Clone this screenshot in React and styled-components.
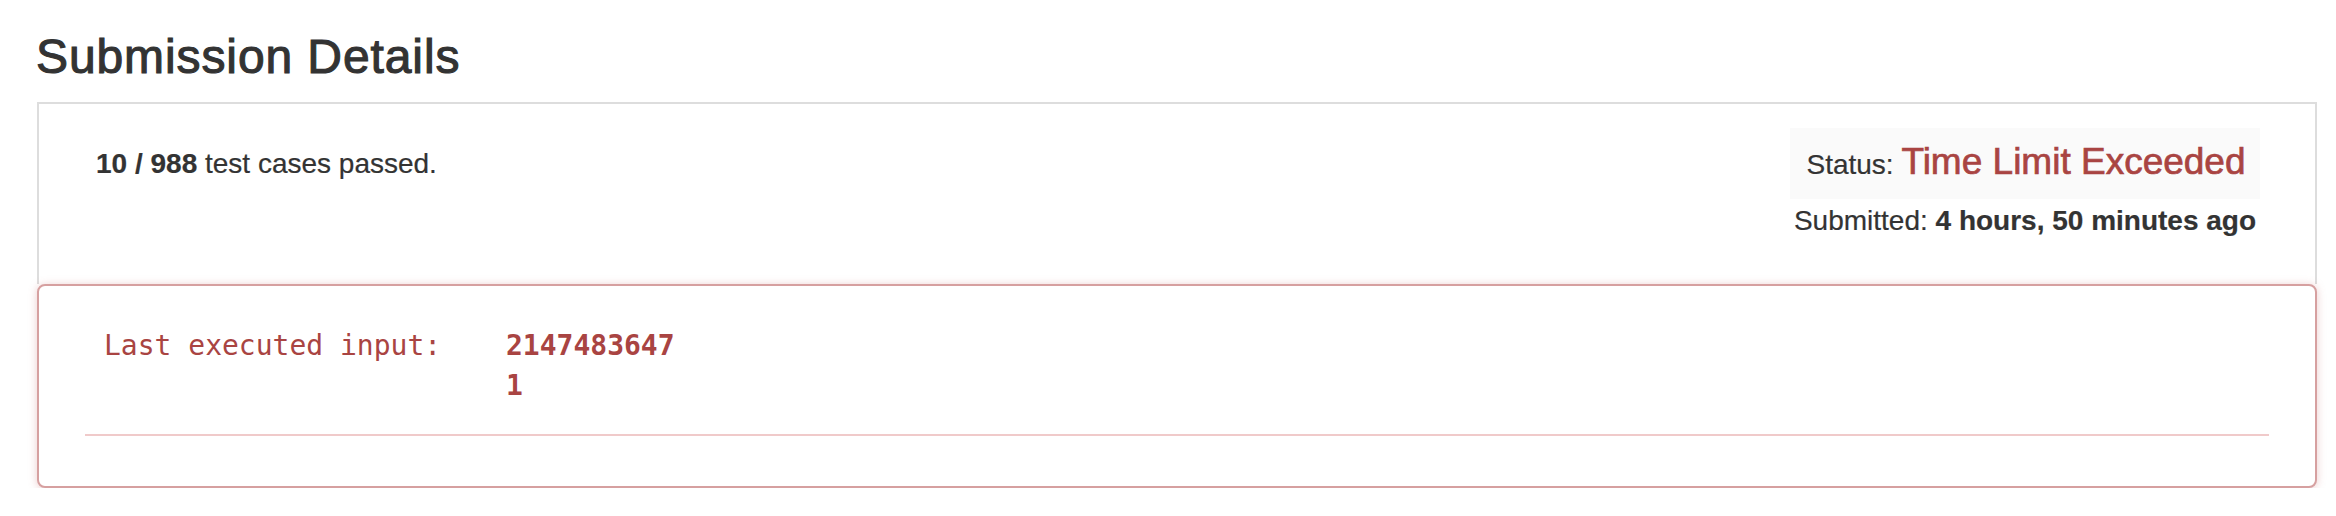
import React from 'react';
import styled, { createGlobalStyle } from 'styled-components';

const GlobalStyle = createGlobalStyle`
  html, body {
    margin: 0;
    padding: 0;
    background: #fff;
  }
  body {
    font-family: "Liberation Sans", Arial, sans-serif;
    color: #333;
  }
  * {
    box-sizing: border-box;
  }
`;

const Page = styled.div`
  width: 2336px;
  padding: 0 19px 0 37px;
`;

const Title = styled.h3`
  margin: 31px 0 19px -1px;
  font-size: 48px;
  line-height: 52px;
  font-weight: 400;
  letter-spacing: 0.9px;
  color: #333;
  -webkit-text-stroke: 1.1px #333;
`;

const SummaryPanel = styled.div`
  display: flex;
  justify-content: space-between;
  height: 182px;
  border: 2px solid #ddd;
  border-bottom: none;
  padding: 0 30px 0 57px;
`;

const Passed = styled.div`
  padding-top: 40px;
  font-size: 28px;
  line-height: 40px;
  -webkit-text-stroke: 0.2px #333;

  b {
    font-weight: 700;
  }
`;

const StatusColumn = styled.div`
  width: 520px;
  padding-top: 24px;
  text-align: center;
  font-size: 28px;
  -webkit-text-stroke: 0.2px #333;
`;

const StatusBox = styled.div`
  display: inline-block;
  padding: 0 14px 0 16px;
  background: #fafafa;
  line-height: 68px;
`;

const StatusText = styled.span`
  font-size: 37px;
  color: #a94442;
  -webkit-text-stroke: 0.7px #a94442;
`;

const Submitted = styled.div`
  margin-top: 2px;
  line-height: 40px;

  b {
    font-weight: 700;
  }
`;

const ErrorPanel = styled.div`
  border: 2px solid #d6a0a0;
  border-radius: 8px;
  box-shadow: 0 1px 9px rgba(200, 110, 110, 0.35);
  padding: 40px 46px 50px;
  background: #fff;
`;

const InputRow = styled.div`
  display: flex;
  padding-left: 19px;
  font-family: "DejaVu Sans Mono", "Liberation Mono", monospace;
  font-size: 28px;
  line-height: 40px;
  color: #a94442;
`;

const InputLabel = styled.div`
  width: 402px;
`;

const InputValue = styled.div`
  font-weight: 700;
`;

const Divider = styled.hr`
  margin: 28px 0 0;
  border: none;
  height: 2px;
  background: #f0caca;
`;

export default function App() {
  return (
    <Page>
      <GlobalStyle />
      <Title>Submission Details</Title>
      <SummaryPanel>
        <Passed>
          <b>10 / 988</b> test cases passed.
        </Passed>
        <StatusColumn>
          <StatusBox>
            Status: <StatusText>Time Limit Exceeded</StatusText>
          </StatusBox>
          <Submitted>
            Submitted: <b>4 hours, 50 minutes ago</b>
          </Submitted>
        </StatusColumn>
      </SummaryPanel>
      <ErrorPanel>
        <InputRow>
          <InputLabel>Last executed input:</InputLabel>
          <InputValue>
            <div>2147483647</div>
            <div>1</div>
          </InputValue>
        </InputRow>
        <Divider />
      </ErrorPanel>
    </Page>
  );
}
